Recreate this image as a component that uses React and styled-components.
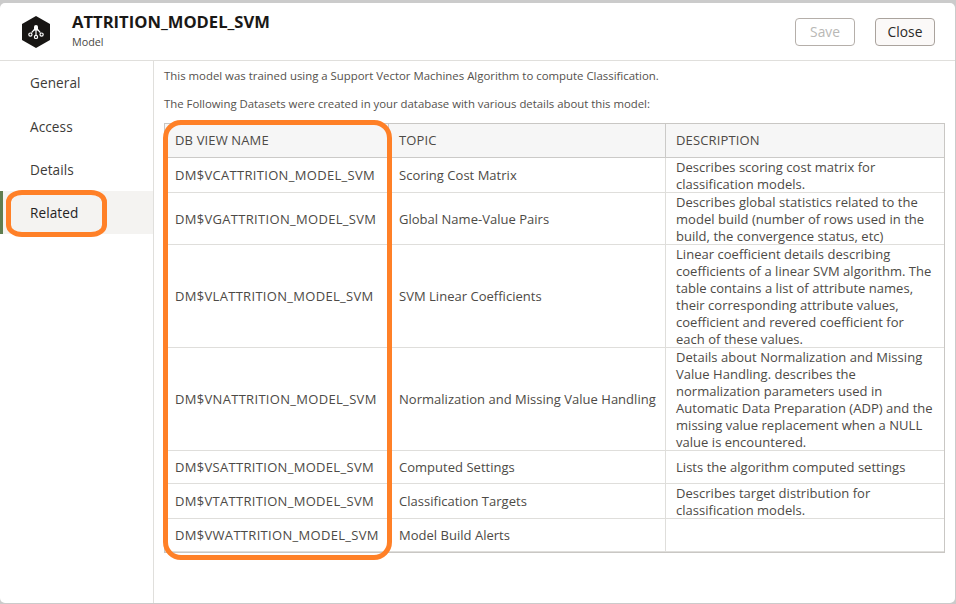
import React from "react";
import styled, { createGlobalStyle } from "styled-components";

const GlobalStyle = createGlobalStyle`
  * { box-sizing: border-box; }
  body {
    margin: 0;
    background: #cbcbcb;
    font-family: "Open Sans", "Noto Sans", sans-serif;
    color: #1a1816;
    overflow: hidden;
  }
`;

const Screen = styled.div`
  height: 604px;
  padding: 3px 1px 1px 0;
`;

const Dialog = styled.div`
  height: 100%;
  display: flex;
  flex-direction: column;
  background: #fff;
  border-radius: 5px;
`;

const Header = styled.header`
  flex: none;
  height: 58px;
  display: flex;
  align-items: flex-start;
  padding: 0 20px 0 22px;
  border-bottom: 1px solid #e0dfdc;
`;

const ModelIcon = styled.svg`
  flex: none;
  display: block;
  width: 28px;
  height: 32px;
  margin-top: 13px;
`;

const Heading = styled.div`
  flex: 1;
  padding: 7px 0 0 22px;
`;

const Title = styled.h1`
  margin: 0;
  font-size: 16.6px;
  line-height: 24px;
  font-weight: 700;
  white-space: nowrap;
`;

const Subtitle = styled.div`
  font-size: 10.8px;
  line-height: 16px;
  color: #4a4845;
`;

const Actions = styled.div`
  display: flex;
  gap: 20px;
  padding-top: 15px;
`;

const Button = styled.button`
  width: 60px;
  height: 28px;
  padding: 0;
  border: 1px solid ${(p) => (p.disabled ? "#b5afaa" : "#aaa39d")};
  border-radius: 4px;
  background: ${(p) => (p.disabled ? "#fff" : "#fbf9f8")};
  color: ${(p) => (p.disabled ? "#b9b8b6" : "#2c2a27")};
  font: 400 13.8px/24px "Open Sans", sans-serif;
`;

const Body = styled.div`
  flex: 1;
  min-height: 0;
  display: flex;
`;

const Sidebar = styled.nav`
  flex: none;
  width: 154px;
  border-right: 1px solid #e0dfdc;
`;

const NavItem = styled.a`
  position: relative;
  display: block;
  height: ${(p) => p.$height}px;
  padding-left: ${(p) => (p.$active ? 27 : 30)}px;
  border-left: ${(p) => (p.$active ? "3px solid #5f7d4f" : "0")};
  background: ${(p) => (p.$active ? "#f4f3f1" : "transparent")};
  color: ${(p) => (p.$active ? "#24221f" : "#3d3b38")};
  font-size: 13.6px;
  letter-spacing: 0.08px;
  line-height: 44px;
`;

const Highlight = styled.span`
  position: absolute;
  border: 5px solid #ff8027;
  pointer-events: none;
`;

const NavHighlight = styled(Highlight)`
  left: 3px;
  top: -1px;
  width: 101px;
  height: 47px;
  border-radius: 16px / 12px;
  z-index: 1;
`;

const ColumnHighlight = styled(Highlight)`
  left: -2px;
  top: -4px;
  width: 229px;
  height: 440px;
  border-radius: 18px;
`;

const Content = styled.main`
  flex: 1;
  padding: 1px 11px 0 10px;
`;

const Intro = styled.p`
  margin: 0;
  height: 28px;
  line-height: 28px;
  font-size: 11.4px;
  letter-spacing: ${(p) => p.$spacing || 0}px;
  color: #54514d;
  white-space: nowrap;
`;

const Table = styled.div`
  position: relative;
  width: 781px;
  margin-top: 5px;
  border: 1px solid #c9c7c4;
`;

const Row = styled.div`
  display: grid;
  grid-template-columns: 224px 277px 278px;
  min-height: 33px;
  border-bottom: 1px solid #dfdedb;
`;

const HeadRow = styled(Row)`
  min-height: 34px;
  background: #f6f6f6;
  border-bottom-color: #cbcac8;
`;

const Cell = styled.div`
  display: flex;
  align-items: center;
  padding-top: ${(p) => (p.$lowered ? 2 : 0)}px;
  padding-left: 10px;
  border-right: 1px solid #dfdedb;
  font-size: 13px;
  line-height: 17px;
  letter-spacing: ${(p) => p.$spacing || 0}px;
  color: #4d4a46;
  white-space: pre;

  &:last-of-type { border-right: 0; }
`;

const HeadCell = styled(Cell)`
  border-right-color: #cbcac8;
`;

const Description = styled.span`
  margin: ${(p) => (p.$multiline ? "1px 0 -1px" : "0")};
`;

const ROWS = [
  ["DM$VCATTRITION_MODEL_SVM", "Scoring Cost Matrix", ["Describes scoring cost matrix for", "classification models."]],
  ["DM$VGATTRITION_MODEL_SVM", "Global Name-Value Pairs", ["Describes global statistics related to the", "model build (number of rows used in the", "build, the convergence status, etc)"]],
  ["DM$VLATTRITION_MODEL_SVM", "SVM Linear Coefficients", ["Linear coefficient details describing", "coefficients of a linear SVM algorithm. The", "table contains a list of attribute names,", "their corresponding attribute values,", "coefficient and revered coefficient for", "each of these values."]],
  ["DM$VNATTRITION_MODEL_SVM", "Normalization and Missing Value Handling", ["Details about Normalization and Missing", "Value Handling. describes the", "normalization parameters used in", "Automatic Data Preparation (ADP) and the", "missing value replacement when a NULL", "value is encountered."]],
  ["DM$VSATTRITION_MODEL_SVM", "Computed Settings", ["Lists the algorithm computed settings"]],
  ["DM$VTATTRITION_MODEL_SVM", "Classification Targets", ["Describes target distribution for", "classification models."]],
  ["DM$VWATTRITION_MODEL_SVM", "Model Build Alerts", []],
];

const NAV = [
  { label: "General", height: 44 },
  { label: "Access", height: 43 },
  { label: "Details", height: 43 },
  { label: "Related", height: 43, active: true },
];

export default function App() {
  return (
    <Screen>
      <GlobalStyle />
      <Dialog>
        <Header>
          <ModelIcon viewBox="0 0 28 32">
            <path d="M14 0 28 8v16l-14 8L0 24V8z" fill="#171513" />
            <path d="M12 11a2 2 0 0 1 4 0v3.4h-4z" fill="#fff" />
            <path d="M12.4 13.5 9.6 16.6M14 14v5M15.6 13.5l2.8 3.1" stroke="#fff" strokeWidth="1.2" />
            <g fill="#171513" stroke="#fff" strokeWidth="1.2">
              <circle cx="8.4" cy="18.6" r="1.6" />
              <circle cx="14" cy="20.9" r="1.6" />
              <circle cx="19.6" cy="18.6" r="1.6" />
            </g>
          </ModelIcon>
          <Heading>
            <Title>ATTRITION_MODEL_SVM</Title>
            <Subtitle>Model</Subtitle>
          </Heading>
          <Actions>
            <Button disabled>Save</Button>
            <Button>Close</Button>
          </Actions>
        </Header>
        <Body>
          <Sidebar>
            {NAV.map((n) => (
              <NavItem key={n.label} $height={n.height} $active={n.active}>
                {n.label}
                {n.active && <NavHighlight />}
              </NavItem>
            ))}
          </Sidebar>
          <Content>
            <Intro>This model was trained using a Support Vector Machines Algorithm to compute Classification.</Intro>
            <Intro $spacing={-0.02}>The Following Datasets were created in your database with various details about this model:</Intro>
            <Table>
              <HeadRow>
                <HeadCell $spacing={0.14}>DB VIEW NAME</HeadCell>
                <HeadCell $spacing={0.14}>TOPIC</HeadCell>
                <HeadCell $spacing={0.14}>DESCRIPTION</HeadCell>
              </HeadRow>
              {ROWS.map(([name, topic, lines]) => (
                <Row key={name}>
                  <Cell $spacing={0.31} $lowered={lines.length === 3}>{name}</Cell>
                  <Cell $spacing={0.02} $lowered={lines.length === 3}>{topic}</Cell>
                  <Cell $spacing={0.03}>
                    <Description $multiline={lines.length > 1}>{lines.join("\n")}</Description>
                  </Cell>
                </Row>
              ))}
              <ColumnHighlight />
            </Table>
          </Content>
        </Body>
      </Dialog>
    </Screen>
  );
}
